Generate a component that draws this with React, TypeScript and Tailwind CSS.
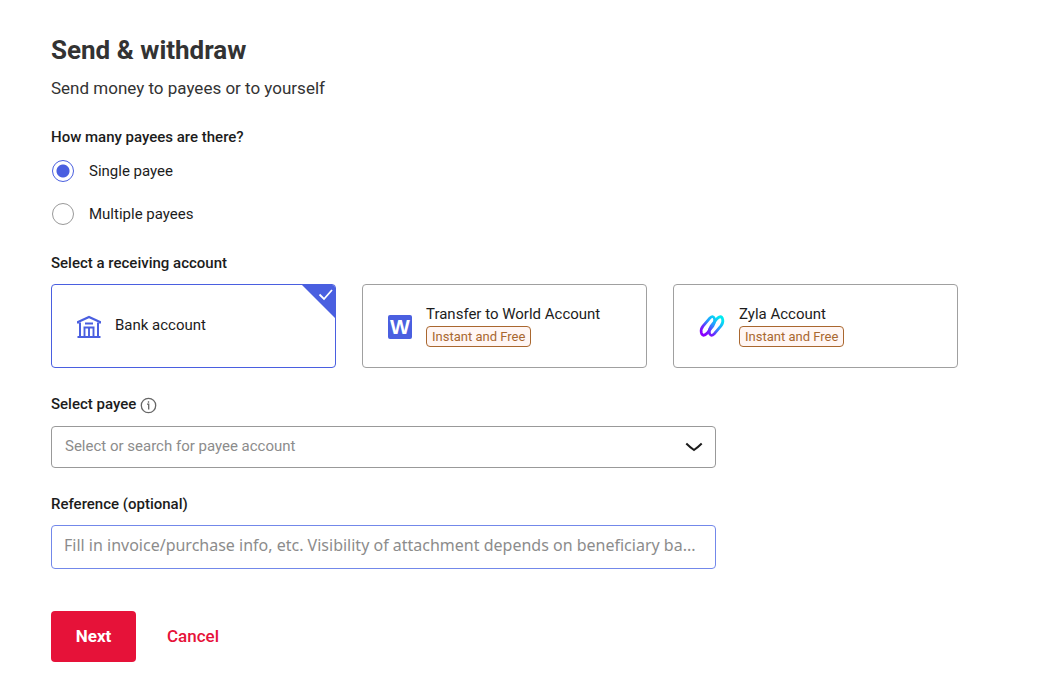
import React, { useState } from "react";

function BankIcon() {
  return (
    <svg className="mt-0.5" width="24" height="24" viewBox="0 0 24 24" fill="none" stroke="#4a5fe0" strokeWidth="2" aria-hidden="true">
      <path d="M1 8.600V7L12 2l11 5v1.600" strokeWidth="2.200" />
      <path d="M3 7.600V21.600M21 7.600V21.600M8 8.500h8" />
      <path d="M6.500 12.500h11M7.500 12.500V21.600M16.500 12.500V21.600M12 12.500v9.100" strokeWidth="1.900" />
      <path d="M.5 22h23" />
    </svg>
  );
}

function WorldIcon() {
  return (
    <span
      className="mt-0.5 flex size-6 items-center justify-center rounded-xs bg-[#4a5fe0] font-['Liberation_Sans',sans-serif] text-[21px] leading-6 font-bold text-white"
      aria-hidden="true"
    >
      W
    </span>
  );
}

function ZylaIcon() {
  return (
    <svg width="26" height="24" viewBox="0 0 26 24" fill="none" aria-hidden="true">
      <defs>
        <linearGradient id="zyla" x1="6" y1="21" x2="20" y2="3" gradientUnits="userSpaceOnUse">
          <stop stopColor="#8a00ff" />
          <stop offset=".25" stopColor="#6a28ff" />
          <stop offset=".6" stopColor="#20a0ff" />
          <stop offset="1" stopColor="#00eaf0" />
        </linearGradient>
      </defs>
      <g stroke="url(#zyla)" strokeWidth="2.800" strokeLinejoin="round">
        <path d="M10.600 4.300Q14.800 .6 15.700 5.500Q16 9 13.900 11.800L8.600 18.700Q3.600 23.900 2.300 18.500Q1.600 15.200 4 12.200Z" />
        <path d="M17.400 5.300L12.100 12.200Q10 15 10.300 18.500Q11.200 23.400 15.400 19.700L22 11.800Q24.400 8.800 23.700 5.500Q22.400 .1 17.400 5.300Z" />
      </g>
    </svg>
  );
}

const accounts = [
  { id: "bank", name: "Bank account", icon: <BankIcon />, tag: "" },
  { id: "world", name: "Transfer to World Account", icon: <WorldIcon />, tag: "Instant and Free" },
  { id: "zyla", name: "Zyla Account", icon: <ZylaIcon />, tag: "Instant and Free" },
];

const payeeCounts = ["Single payee", "Multiple payees"];

export default function App() {
  const [count, setCount] = useState("Single payee");
  const [account, setAccount] = useState("bank");
  const [reference, setReference] = useState("");

  return (
    <main className="bg-white pt-8 pr-20 pb-8 pl-[51px] font-[Roboto,'Liberation_Sans',sans-serif] text-[15px] leading-5 text-[#1c1c1c]">
      <h1 className="text-[26px] leading-9 font-bold text-[#333]">Send &amp; withdraw</h1>
      <p className="mt-2 text-[17px] leading-6 text-[#333]">Send money to payees or to yourself</p>

      <form onSubmit={(e) => e.preventDefault()}>
        <fieldset className="mt-[27px]">
          <legend className="font-medium">How many payees are there?</legend>
          <div className="mt-[13px] flex flex-col gap-[21px]">
            {payeeCounts.map((label) => (
              <label key={label} className="flex items-center gap-[15px] self-start">
                <input
                  type="radio"
                  name="payees"
                  className="ml-px size-[22px] appearance-none rounded-full border border-[#999] bg-white checked:border-[#4a5fe0] checked:bg-[radial-gradient(circle,#4a5fe0_6px,transparent_7px)]"
                  checked={count === label}
                  onChange={() => setCount(label)}
                />
                {label}
              </label>
            ))}
          </div>
        </fieldset>

        <fieldset className="mt-7">
          <legend className="font-medium">Select a receiving account</legend>
          <div className="mt-[11px] grid grid-cols-3 gap-[26px]">
            {accounts.map(({ id, name, icon, tag }) => (
              <label
                key={id}
                className="relative flex h-[84px] items-center gap-[14px] overflow-hidden rounded border border-[#a0a0a0] pl-[25px] has-checked:border-[#4a5fe0]"
              >
                <input
                  type="radio"
                  name="account"
                  className="peer sr-only"
                  checked={account === id}
                  onChange={() => setAccount(id)}
                />
                <svg
                  className="absolute top-0 right-0 hidden peer-checked:block"
                  width="33"
                  height="33"
                  viewBox="0 0 33 33"
                  aria-hidden="true"
                >
                  <path d="M0 0h33v33z" fill="#4a5fe0" />
                  <path d="m17.500 9.500 4.500 4.500 8-9" fill="none" stroke="#fff" strokeWidth="1.8" />
                </svg>
                {icon}
                <span className="flex flex-col items-start gap-0.5 pb-0.5">
                  <span>{name}</span>
                  {tag && (
                    <span className="rounded border border-[#a9672f] bg-[#fff6f4] px-[5px] text-[13px] leading-[19px] text-[#a9672f]">
                      {tag}
                    </span>
                  )}
                </span>
              </label>
            ))}
          </div>
        </fieldset>

        <div className="mt-[25px] max-w-[665px]">
          <div className="flex items-center gap-1">
            <label htmlFor="payee" className="font-medium">
              Select payee
            </label>
            <svg className="mt-1" width="17" height="17" viewBox="0 0 17 17" fill="none" stroke="#666" strokeWidth="1.3" aria-hidden="true">
              <circle cx="8.5" cy="8.5" r="7.2" />
              <path d="M7 7.2h1.700v5.300M8.500 4.200v1.500" />
            </svg>
          </div>
          <div className="mt-3 grid items-center">
            <select
              id="payee"
              defaultValue=""
              className="col-start-1 row-start-1 h-[42px] w-full appearance-none rounded border border-[#999] bg-white pr-10 pb-0.5 pl-[13px] text-[#8c8c8c]"
            >
              <option value="">Select or search for payee account</option>
            </select>
            <svg
              className="pointer-events-none col-start-1 row-start-1 mr-[13px] justify-self-end"
              width="18"
              height="12"
              viewBox="0 0 18 12"
              fill="none"
              stroke="#1c1c1c"
              strokeWidth="2"
              aria-hidden="true"
            >
              <path d="M1.300 2.500q3.700 3.700 7.700 6.500q4-2.800 7.700-6.500" />
            </svg>
          </div>
        </div>

        <div className="mt-[26px] flex max-w-[665px] flex-col gap-[11px]">
          <label htmlFor="reference" className="font-medium">
            Reference (optional)
          </label>
          <input
            id="reference"
            type="text"
            value={reference}
            onChange={(e) => setReference(e.target.value)}
            placeholder="Fill in invoice/purchase info, etc. Visibility of attachment depends on beneficiary ba..."
            className="h-11 w-full rounded border border-[#7388ea] pr-2 pb-1 pl-3 font-['Noto_Sans',sans-serif] text-base placeholder:text-[#8c8c8c]"
          />
        </div>

        <div className="mt-[42px] flex items-center gap-[31px] text-[17px] leading-5">
          <button type="submit" className="h-[51px] w-[85px] rounded bg-[#e61239] pb-0.5 font-bold text-white">
            Next
          </button>
          <button type="button" className="pb-0.5 font-medium text-[#e61239]">
            Cancel
          </button>
        </div>
      </form>
    </main>
  );
}
